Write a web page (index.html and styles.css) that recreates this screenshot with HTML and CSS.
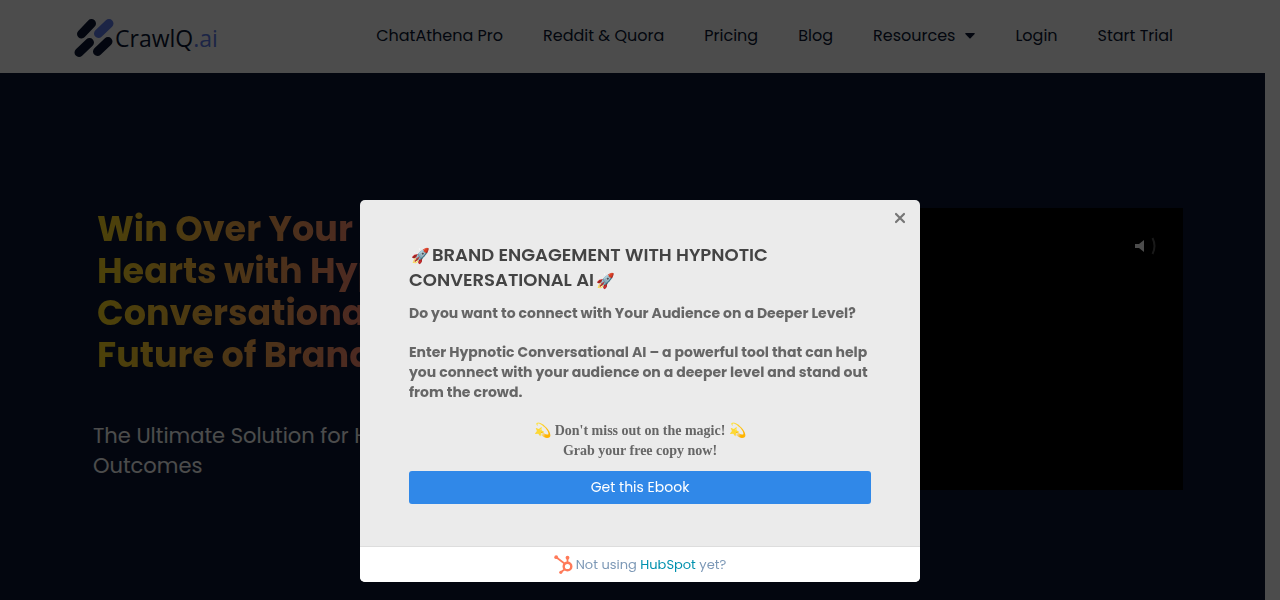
FILE: index.html
```html
<!DOCTYPE html>
<html lang="en">
<head>
<meta charset="utf-8">
<meta name="viewport" content="width=device-width, initial-scale=1">
<title>CrawlQ.ai</title>
<link rel="stylesheet" href="styles.css">
</head>
<body>
<header class="header">
  <a class="logo" href="#" aria-label="CrawlQ.ai">
    <svg class="logo-mark" viewBox="0 0 40 40" width="40" height="40" fill="none" stroke-width="9" stroke-linecap="round" aria-hidden="true">
      <path d="M7.500 16 17.500 5.500M5 34.500 15.500 24.500M23.500 33.500 34 23.500" stroke="#0a1732"/>
      <path d="M24.500 15.500 35 5.500" stroke="#5f7dea"/>
    </svg>
    <span class="logo-text">CrawlQ<span class="logo-suffix">.ai</span></span>
  </a>
  <nav class="nav" aria-label="Main">
    <a href="#">ChatAthena Pro</a>
    <a href="#">Reddit &amp; Quora</a>
    <a href="#">Pricing</a>
    <a href="#">Blog</a>
    <a href="#" class="nav-parent">Resources
      <svg width="10" height="6" viewBox="0 0 10 6" aria-hidden="true"><path d="M.8 0h8.400q1 .2.4 1L5.600 5.200q-.6.5-1.200 0L.4 1Q-.2.2.8 0z" fill="currentColor"/></svg></a>
    <a href="#">Login</a>
    <a href="#">Start Trial</a>
  </nav>
</header>
<main class="hero">
  <section class="hero-copy">
    <h1 class="hero-title">Win Over Your Audience<br>Hearts with Hypnotic<br>Conversational AI: The<br>Future of Branding</h1>
    <p class="hero-subtitle">The Ultimate Solution for Higher<br>Outcomes</p>
  </section>
  <section class="video" aria-label="Video">
    <svg width="24" height="20" viewBox="0 0 24 20" aria-hidden="true">
      <path d="M2 8h4l5-4v12l-5-4H2z" fill="#fff"/>
      <path d="M19.500 2q4 8 0 16" fill="none" stroke="#555" stroke-width="2"/>
    </svg>
  </section>
</main>
<div class="overlay">
  <div class="modal" role="dialog" aria-modal="true" aria-labelledby="modal-title">
    <button class="close" type="button" aria-label="Close">
      <svg width="12" height="12" viewBox="0 0 12 12" aria-hidden="true"><path d="M2 2 10 10M10 2 2 10" stroke="#767676" stroke-width="2.200" stroke-linecap="round"/></svg>
    </button>
    <div class="modal-body">
      <h2 class="modal-title" id="modal-title"><span class="emoji">🚀</span>BRAND ENGAGEMENT WITH HYPNOTIC<br>CONVERSATIONAL AI<span class="emoji">🚀</span></h2>
      <p class="modal-text">Do you want to connect with Your Audience on a Deeper Level?</p>
      <p class="modal-text">Enter Hypnotic Conversational AI – a powerful tool that can help<br>you connect with your audience on a deeper level and stand out<br>from the crowd.</p>
      <p class="modal-note">💫 Don't miss out on the magic! 💫<br>Grab your free copy now!</p>
      <button class="cta" type="button">Get this Ebook</button>
    </div>
    <footer class="modal-footer">
      <svg width="19" height="19" viewBox="0 0 19 19" fill="none" stroke="#ff7a59" stroke-linecap="round" aria-hidden="true">
        <circle cx="13.500" cy="11.500" r="3.800" stroke-width="2.400"/>
        <path d="M13.500 7V3M10.500 8.500 2.500 2.500M10.500 14.500 7 17" stroke-width="1.700"/>
        <g fill="#ff7a59" stroke="none"><circle cx="2.200" cy="2.200" r="1.900"/><circle cx="13.500" cy="2.700" r="1.900"/><circle cx="6.800" cy="17.300" r="1.600"/></g>
      </svg>
      <span>Not using <a href="#">HubSpot</a> yet?</span>
    </footer>
  </div>
</div>
</body>
</html>
```
FILE: styles.css
```css
* { box-sizing: border-box; }
body {
  margin: 0;
  min-height: 100vh;
  display: flex;
  flex-direction: column;
  overflow: hidden;
  background: #fff;
  font-family: Poppins, Inter, sans-serif;
}
h1, h2, p { margin: 0; }
a { color: inherit; text-decoration: none; }
button { font-family: inherit; border: 0; cursor: pointer; }

.header {
  display: flex;
  align-items: center;
  justify-content: space-between;
  padding: 0 107px 0 74px;
  height: 73px;
  color: #0a1732;
}
.logo { display: flex; align-items: center; gap: 1px; padding-top: 3px; }
.logo-text { font: 23px/32px "Open Sans", sans-serif; }
.logo-suffix { color: #5f7dea; }
.nav { display: flex; gap: 40px; padding-bottom: 2px; font-size: 16px; line-height: 24px; }
.nav-parent { display: flex; align-items: center; gap: 10px; }

.hero {
  flex: 1;
  display: grid;
  grid-template-columns: 1fr 1fr;
  gap: 46px;
  margin-right: 15px;
  padding: 135px 82px 0 93px;
  background: #0a1732;
}
.hero-title {
  margin: 0 0 45px 4px;
  font-size: 35px;
  line-height: 42px;
  font-weight: 700;
  white-space: nowrap;
  color: transparent;
  background: linear-gradient(90deg, #ffdc20, #ff8c70 50%, #ff5c90);
  background-clip: text;
  -webkit-background-clip: text;
}
.hero-subtitle { font-size: 21px; line-height: 30px; color: #fff; white-space: nowrap; }
.video {
  display: flex;
  justify-content: flex-end;
  align-items: flex-start;
  height: 282px;
  padding: 28px 26px;
  background: #000;
}

.overlay {
  position: fixed;
  inset: 0;
  display: flex;
  justify-content: center;
  align-items: flex-end;
  padding-bottom: 18px;
  background: rgba(0, 0, 0, .7);
}
.modal {
  position: relative;
  width: 560px;
  max-width: 100%;
  overflow: hidden;
  border-radius: 5px;
  background: #ebebeb;
}
.close {
  position: absolute;
  top: 12px;
  right: 14px;
  display: flex;
  padding: 0;
  background: none;
}
.modal-body { padding: 42px 49px 42px; color: #666; }
.modal-title {
  margin-bottom: 11px;
  font-size: 18px;
  line-height: 25px;
  font-weight: 600;
  color: #444;
  white-space: nowrap;
}
.emoji { padding: 0 2px; font-size: 15px; line-height: 1; }
.modal-text {
  margin-bottom: 19px;
  font-size: 14px;
  line-height: 20px;
  font-weight: 700;
  white-space: nowrap;
}
.modal-note {
  margin-bottom: 10px;
  font: bold 14px/20px "Liberation Serif", serif;
  text-align: center;
}
.cta {
  width: 100%;
  height: 33px;
  border-radius: 3px;
  background: #3088e8;
  color: #fff;
  font-size: 14px;
}
.modal-footer {
  display: flex;
  justify-content: center;
  align-items: center;
  gap: 3px;
  height: 36px;
  border-top: 1px solid #ddd;
  background: #fff;
  color: #7c98b6;
  font-size: 13px;
}
.modal-footer a { color: #0091ae; }
```
